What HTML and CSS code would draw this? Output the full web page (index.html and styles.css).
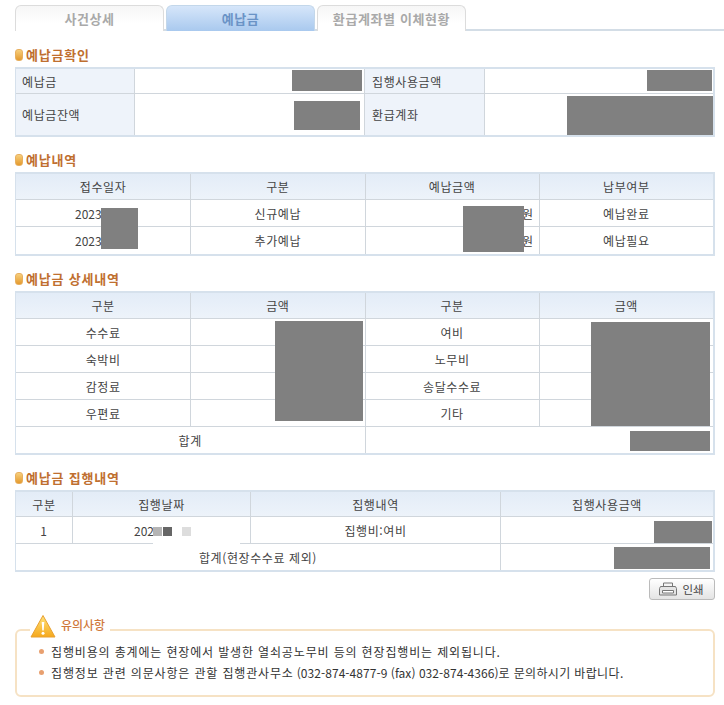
FILE: index.html
```html
<!DOCTYPE html>
<html lang="ko">
<head>
<meta charset="UTF-8">
<meta name="viewport" content="width=device-width,initial-scale=1">
<title>예납금</title>
<link rel="stylesheet" href="styles.css">
</head>
<body>

<!-- Tabs -->
<nav class="tabs">
  <a class="tab">사건상세</a>
  <a class="tab active">예납금</a>
  <a class="tab">환급계좌별 이체현황</a>
</nav>

<!-- 예납금확인 -->
<h2 class="title first">예납금확인</h2>
<div class="tbl-wrap">
  <table class="tbl t-confirm">
    <colgroup><col class="c118"><col class="c230"><col class="c120"><col></colgroup>
    <tr class="r25">
      <th class="label">예납금</th><td></td>
      <th class="label">집행사용금액</th><td></td>
    </tr>
    <tr class="r41">
      <th class="label">예납금잔액</th><td></td>
      <th class="label">환급계좌</th><td></td>
    </tr>
  </table>
  <i class="mask m1"></i><i class="mask m2"></i><i class="mask m3"></i><i class="mask m4"></i>
</div>

<!-- 예납내역 -->
<h2 class="title">예납내역</h2>
<div class="tbl-wrap">
  <table class="tbl">
    <tr><th>접수일자</th><th>구분</th><th>예납금액</th><th>납부여부</th></tr>
    <tr><td class="date d2023">2023.</td><td>신규예납</td><td class="won">원</td><td>예납완료</td></tr>
    <tr><td class="date d2023">2023.</td><td>추가예납</td><td class="won">원</td><td>예납필요</td></tr>
  </table>
  <i class="mask m5"></i><i class="mask m6"></i>
</div>

<!-- 예납금 상세내역 -->
<h2 class="title">예납금 상세내역</h2>
<div class="tbl-wrap">
  <table class="tbl t-short">
    <tr><th>구분</th><th>금액</th><th>구분</th><th>금액</th></tr>
    <tr><td>수수료</td><td></td><td>여비</td><td></td></tr>
    <tr><td>숙박비</td><td></td><td>노무비</td><td></td></tr>
    <tr><td>감정료</td><td></td><td>송달수수료</td><td></td></tr>
    <tr><td>우편료</td><td></td><td>기타</td><td></td></tr>
    <tr><td colspan="2">합계</td><td colspan="2"></td></tr>
  </table>
  <i class="mask m7"></i><i class="mask m8"></i><i class="mask m9"></i>
</div>

<!-- 예납금 집행내역 -->
<h2 class="title">예납금 집행내역</h2>
<div class="tbl-wrap">
  <table class="tbl t-short t-exec">
    <colgroup><col class="c56"><col class="c178"><col class="c250"><col></colgroup>
    <tr><th>구분</th><th>집행날짜</th><th>집행내역</th><th>집행사용금액</th></tr>
    <tr><td>1</td><td class="date">202</td><td>집행비:여비</td><td></td></tr>
    <tr><td colspan="3">합계(현장수수료 제외)</td><td></td></tr>
  </table>
  <i class="blur"></i>
  <i class="px px1"></i><i class="px px2"></i><i class="px px3"></i>
  <i class="mask m10"></i><i class="mask m11"></i>
</div>

<div class="actions">
  <button class="print" type="button">
    <svg width="20" height="16" viewBox="0 0 20 16" fill="none" stroke="#777">
      <path d="M5.500 5.500v-3.500h9v3.500" fill="#f4f4f4"/>
      <path d="M2.500 5.500h15l1 2v6.500h-17v-6.500z" fill="#e4e4e4"/>
      <path d="M4.500 9.500h11v2.500h-11z" fill="#fff"/>
    </svg>
    인쇄
  </button>
</div>

<!-- 유의사항 -->
<section class="notice">
  <div class="notice-head">
    <svg width="26" height="25" viewBox="0 0 26 25">
      <defs>
        <linearGradient id="warn" x1="0" y1="0" x2="0" y2="1">
          <stop offset="0" stop-color="#ffe37a"/>
          <stop offset="1" stop-color="#f5a81c"/>
        </linearGradient>
      </defs>
      <path d="M13 1.500 L25 23 H1 Z" fill="url(#warn)" stroke="#e8a030" stroke-linejoin="round"/>
      <path d="M11.700 8h2.600l-.6 8.500h-1.400z" fill="#fff"/>
      <circle cx="13" cy="19.300" r="1.500" fill="#fff"/>
    </svg>
    <strong>유의사항</strong>
  </div>
  <ul>
    <li>집행비용의 총계에는 현장에서 발생한 열쇠공노무비 등의 현장집행비는 제외됩니다.</li>
    <li><span>집행정보 관련 의문사항은 관할 집행관사무소<span class="tel">(032-874-4877-9 (fax) 032-874-4366)</span><span class="tail">로 문의하시기 바랍니다.</span></span></li>
  </ul>
</section>

</body>
</html>
```

FILE: styles.css
```css
/* ------------- BASE ------------- */
*{box-sizing:border-box}
body{
  margin:0;padding:5px 9px 0 15px;background:#fff;color:#444;
  font-family:'Noto Sans CJK KR','Noto Sans',sans-serif;font-size:12px;
  letter-spacing:.6px;
}

/* Tabs */
.tabs{display:flex;gap:2px;height:26px;border-bottom:2px solid #d3dde6;margin-right:-9px}
.tab{
  width:149px;height:26px;line-height:25px;text-align:center;font-size:13px;font-weight:700;
  color:#a9a9a9;background:linear-gradient(#f6f6f6,#fff 70%);
  border:1px solid #dcdcdc;border-bottom:none;border-radius:6px 6px 0 0;
}
.tab.active{
  color:#6a93c6;background:linear-gradient(#d6e6fa,#a9c9ee);
  border-color:#c3d7ea;
}

/* Section title */
.title{
  display:flex;align-items:center;gap:3px;height:22px;margin:13px 0 0;
  font-size:13px;line-height:20px;font-weight:700;color:#bf6f30;padding-bottom:3px;
  letter-spacing:.8px;
}
.title.first{margin-top:14px}
.title:before{
  content:"";width:6px;height:10px;border-radius:3px;
  background:linear-gradient(#f7cf7c,#e49a2e);border:1px solid #e8b060;
}

/* Tables */
.tbl-wrap{position:relative;width:700px}
.tbl{
  width:700px;border-collapse:separate;border-spacing:0;table-layout:fixed;
  border:solid #d6e1ec;border-width:2px 2px 2px 1px;
}
.tbl th,.tbl td{
  height:27px;padding:0 7px;text-align:center;font-weight:400;color:#444;
  border-left:1px solid #d0d6dc;border-bottom:1px solid #d0d6dc;
}
.tbl tr>:first-child{border-left:none}
.tbl tr:last-child>*{border-bottom:none}
.tbl th{height:26px;background:linear-gradient(#e3ecf7,#edf3fa)}
.tbl th.label{background:#eef3fa;text-align:left}
.tbl tr>th.label:first-child{padding-left:6px}
.tbl .won{text-align:right;padding-right:5px}
.tbl .date{text-align:left;padding-left:61px;letter-spacing:0}
.tbl .d2023{padding-left:59px}
.t-short tr:last-child>*{height:26px}
.t-exec th{height:25px}
.tbl .r25>*{height:25px}
.tbl .r41>*{height:41px}
.c118{width:118px}
.c230{width:230px}
.c120{width:120px}
.c56{width:56px}
.c178{width:178px}
.c250{width:250px}

/* Redacted areas sit on top of the tables */
.mask{position:absolute;background:#808080}
.m1{left:277px;top:3px;width:70px;height:21px}
.m2{left:279px;top:34px;width:66px;height:29px}
.m3{left:632px;top:3px;width:65px;height:21px}
.m4{left:552px;top:29px;width:146px;height:39px}
.m5{left:86px;top:36px;width:37px;height:41px}
.m6{left:448px;top:34px;width:61px;height:46px}
.m7{left:260px;top:30px;width:88px;height:100px}
.m8{left:576px;top:31px;width:119px;height:104px}
.m9{left:615px;top:140px;width:80px;height:20px}
.m10{left:639px;top:31px;width:58px;height:22px}
.m11{left:599px;top:57px;width:96px;height:22px}
.blur{position:absolute;left:138px;top:27px;width:87px;height:30px;background:#fff}
.px{position:absolute;top:37px;height:9px;width:9px}
.px1{left:138px;background:#b4b4b4}
.px2{left:148px;background:#666}
.px3{left:167px;background:#ddd}

/* Print button */
.actions{display:flex;justify-content:flex-end;width:700px;margin-top:6px}
.print{
  display:flex;align-items:center;justify-content:center;gap:4px;width:66px;height:22px;padding:0 2px 0 0;
  font:11.500px 'Noto Sans CJK KR',sans-serif;letter-spacing:0;color:#444;
  background:linear-gradient(#fff,#e4e4e4);border:1px solid #bbb;border-radius:3px;
}

/* Notice */
.notice{
  position:relative;width:700px;height:68px;margin-top:29px;padding:10px 0 0 22px;
  border:2px solid #f6e2c4;border-radius:6px;color:#333;
}
.notice-head{
  position:absolute;left:13px;top:-18px;display:flex;align-items:center;gap:5px;
  padding-right:5px;background:#fff;height:26px;
}
.notice-head strong{font-size:12px;color:#d0793c;font-weight:500;margin-top:-3px;letter-spacing:0}
.notice ul{margin:0;padding:0;list-style:none}
.notice li{display:flex;align-items:center;gap:7px;height:21px;white-space:nowrap;letter-spacing:.85px}
.notice li:before{content:"";width:5px;height:5px;border-radius:50%;background:#e8a070;flex:none}
.tel{letter-spacing:.05px;margin-left:3px}
.tail{letter-spacing:.35px}
```
